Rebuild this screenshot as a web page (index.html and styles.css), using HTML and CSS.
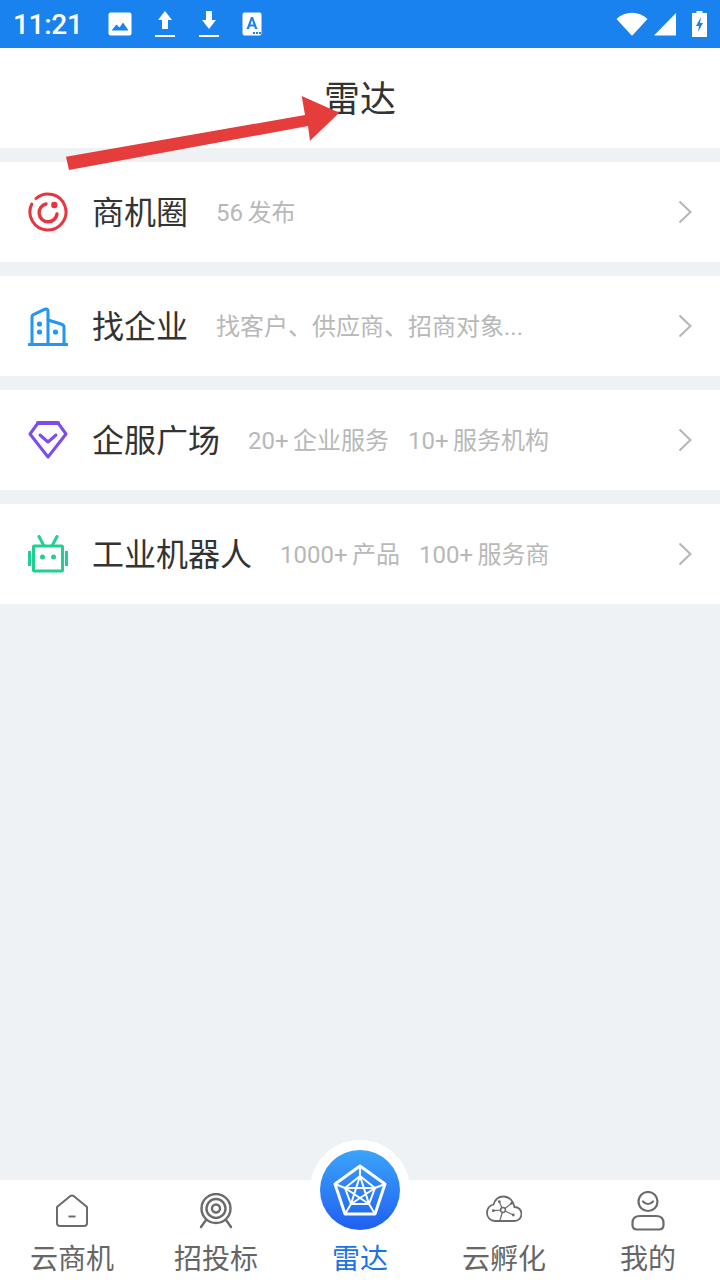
FILE: index.html
```html
<!DOCTYPE html>
<html lang="zh-CN">
<head>
    <meta charset="UTF-8">
    <meta name="viewport" content="width=device-width, initial-scale=1.0">
    <title>雷达</title>
    <link rel="stylesheet" href="styles.css">
</head>
<body>
    <div class="status-bar">
        <span class="time">11:21</span>
        <div class="status-left">
            <svg width="24" height="24" viewBox="0 0 24 24"><rect x="0.5" y="0.5" width="23" height="23" rx="2" fill="#fff"/><path d="M3.5 18.5 L8.5 12.5 L11.5 15.5 L15 10.5 L20.5 18.5 Z" fill="#1a82ef"/></svg>
            <svg width="22" height="28" viewBox="0 0 22 28"><path d="M11 1 L18 10 H14 V19 H8 V10 H4 Z M1 25 H21 V27 H1 Z" fill="#fff"/></svg>
            <svg width="22" height="28" viewBox="0 0 22 28"><path d="M8 1 H14 V10 H18 L11 19 L4 10 H8 Z M1 25 H21 V27 H1 Z" fill="#fff"/></svg>
            <svg width="20" height="24" viewBox="0 0 20 24"><rect x="0.5" y="0.5" width="19" height="23" rx="2" fill="#fff"/><path d="M9 5 H11 L15.5 17 H13 L12.2 14.5 H7.800 L7 17 H4.500 Z M8.500 12.500 H11.500 L10 8 Z" fill="#1a82ef"/><path d="M11 20 h2 v2 h-2 z M14 20 h2 v2 h-2 z M17 20 h2 v2 h-2 z" fill="#1a82ef"/></svg>
        </div>
        <div class="status-right">
            <svg width="32" height="24" viewBox="0 0 32 24"><path d="M0.5 7 C9 -1.500 23 -1.500 31.500 7 L16.800 23 Q16 24 15.200 23 Z" fill="#fff"/></svg>
            <svg width="24" height="24" viewBox="0 0 24 24"><path d="M1 23.500 L23 1 V23.500 Z" fill="#fff"/></svg>
            <svg class="battery" width="15" height="26" viewBox="0 0 15 26"><path d="M4.500 0 H10.500 V2 H15 V26 H0 V2 H4.500 Z" fill="#fff"/><path d="M9 6 L4 15 H7 L6 21 L11 12 H8 Z" fill="#1a82ef"/></svg>
        </div>
    </div>

    <header class="title-bar">雷达</header>

    <main class="list">
        <div class="row">
            <svg class="row-icon" width="40" height="40" viewBox="0 0 40 40" fill="none" stroke="#e8343f" stroke-linecap="round"><path d="M8 6.500 A18 18 0 1 1 3.800 12" stroke-width="3"/><path d="M18 12 A9 9 0 1 0 29 22" stroke-width="3.400"/><circle cx="26.300" cy="13" r="3.200" fill="#e8343f" stroke="none"/></svg>
            <span class="row-title">商机圈</span>
            <span class="row-sub">56 发布</span>
            <svg class="chevron" width="14" height="24" viewBox="0 0 14 24"><path d="M1.500 1.500 L12.500 12 L1.500 22.500" fill="none" stroke="#b5b5b5" stroke-width="2"/></svg>
        </div>
        <div class="row">
            <svg class="row-icon" width="40" height="40" viewBox="0 0 40 40" fill="none" stroke="#2196f3" stroke-width="3" stroke-linecap="round" stroke-linejoin="round"><path d="M1 38.500 H39"/><path d="M4 38 V11 Q4 9 6 8.400 L17 3.200 Q20 2.400 20 5 V38"/><path d="M20 14 L33 18 Q36 19 36 21 V38"/><g fill="#2196f3" stroke="none"><circle cx="11.500" cy="18" r="2.600"/><circle cx="11.500" cy="26" r="2.600"/><circle cx="27.500" cy="26" r="2.600"/></g></svg>
            <span class="row-title">找企业</span>
            <span class="row-sub">找客户、供应商、招商对象...</span>
            <svg class="chevron" width="14" height="24" viewBox="0 0 14 24"><path d="M1.500 1.500 L12.500 12 L1.500 22.500" fill="none" stroke="#b5b5b5" stroke-width="2"/></svg>
        </div>
        <div class="row">
            <svg class="row-icon" width="40" height="38" viewBox="0 0 40 38" fill="none" stroke="#7c4dea" stroke-width="3" stroke-linecap="round" stroke-linejoin="round"><path d="M10 2 H30 L38 13 L20 36 L2 13 Z"/><path d="M10 2 H30" stroke-width="4"/><path d="M12 14 L20 21 L28 14"/></svg>
            <span class="row-title">企服广场</span>
            <span class="row-sub">20+ 企业服务</span>
            <span class="row-sub">10+ 服务机构</span>
            <svg class="chevron" width="14" height="24" viewBox="0 0 14 24"><path d="M1.500 1.500 L12.500 12 L1.500 22.500" fill="none" stroke="#b5b5b5" stroke-width="2"/></svg>
        </div>
        <div class="row">
            <svg class="row-icon" width="40" height="38" viewBox="0 0 40 38" fill="none" stroke="#22cf8e" stroke-width="3" stroke-linecap="round"><rect x="5.500" y="11" width="29" height="25" rx="1"/><path d="M11 1.500 L15.500 10 M29 1.500 L24.500 10"/><path d="M1.500 16 V31 M38.500 16 V31" stroke-linecap="butt"/><circle cx="14.500" cy="22" r="2.500" fill="#22cf8e" stroke="none"/><circle cx="25.500" cy="22" r="2.500" fill="#22cf8e" stroke="none"/></svg>
            <span class="row-title">工业机器人</span>
            <span class="row-sub">1000+ 产品</span>
            <span class="row-sub">100+ 服务商</span>
            <svg class="chevron" width="14" height="24" viewBox="0 0 14 24"><path d="M1.500 1.500 L12.500 12 L1.500 22.500" fill="none" stroke="#b5b5b5" stroke-width="2"/></svg>
        </div>
    </main>

    <nav class="tab-bar">
        <div class="tab">
            <div class="tab-icon">
                <svg width="34" height="34" viewBox="0 0 34 34" fill="none" stroke="#6b6b6b" stroke-width="2" stroke-linejoin="round"><path d="M2 13 L15 2.200 Q17 1 19 2.200 L32 13 V29 Q32 32 29 32 H5 Q2 32 2 29 Z"/><path d="M13.500 22.500 H20.500"/></svg>
            </div>
            <span>云商机</span>
        </div>
        <div class="tab">
            <div class="tab-icon">
                <svg width="36" height="36" viewBox="0 0 36 36" fill="none" stroke="#6b6b6b" stroke-width="2.400"><circle cx="18" cy="15.500" r="14.500"/><circle cx="18" cy="15.500" r="9.500"/><circle cx="18" cy="15.500" r="4"/><path d="M8 27 L3 34 M28 27 L33 34" stroke-linecap="round"/></svg>
            </div>
            <span>招投标</span>
        </div>
        <div class="tab tab-active">
            <div class="radar-ring">
                <div class="radar-btn">
                    <svg width="54" height="52" viewBox="0 0 54 52" fill="none" stroke="#fff" stroke-width="2" stroke-linejoin="round"><path d="M27 2 L52 20 L42 50 H12 L2 20 Z" stroke-width="3"/><path d="M27 12 L42 24 L36 40 H18 L12 24 Z"/><path d="M27 2 V12 M52 20 L42 24 M42 50 L36 40 M12 50 L18 40 M2 20 L12 24"/><path d="M27 12 L36 40 L12 24 H42 L18 40 Z"/></svg>
                </div>
            </div>
            <div class="tab-icon"></div>
            <span>雷达</span>
        </div>
        <div class="tab">
            <div class="tab-icon tab-icon-cloud">
                <svg width="36" height="28" viewBox="0 0 36 28" fill="none" stroke="#6b6b6b" stroke-width="1.800" stroke-linecap="round"><path d="M9 26 H28 C33 26 35.500 22.500 35.500 19 C35.500 15 32.500 12 28.500 12 C27.500 5.500 23 1.500 17.500 1.500 C12.500 1.500 9 4.500 7.500 9.500 C3.500 10.500 1 14 1 18 C1 22.500 4.500 26 9 26 Z"/><path d="M17 15 L25.600 8.300 M17 15 L27.300 20 M17 15 L14 25 M17 15 L7.300 15.700 M17 15 L13.300 6.700" stroke-width="1.200"/><circle cx="17" cy="15" r="2.400" fill="#fff" stroke-width="1.500"/><g fill="#6b6b6b" stroke="none"><circle cx="25.600" cy="8.300" r="1.400"/><circle cx="27.300" cy="20" r="1.400"/><circle cx="7.300" cy="15.700" r="1.400"/><circle cx="13.300" cy="6.700" r="1.400"/></g></svg>
            </div>
            <span>云孵化</span>
        </div>
        <div class="tab">
            <div class="tab-icon">
                <svg width="34" height="40" viewBox="0 0 34 40" fill="none" stroke="#6b6b6b" stroke-width="2.200" stroke-linecap="round"><circle cx="17" cy="10.500" r="9.500"/><path d="M12 10.500 Q17 15.500 22 10.500"/><path d="M9 25 H25 Q32.500 25 32.500 32 V34 Q32.500 38.500 28 38.500 H6 Q1.500 38.500 1.500 34 V32 Q1.500 25 9 25 Z"/></svg>
            </div>
            <span>我的</span>
        </div>
    </nav>

    <svg class="arrow" width="290" height="90" viewBox="0 0 290 90"><path d="M6 66.700 L245 25 L241.700 6 L279.300 22.700 L250 50.700 L248 36 L9 80 Z" fill="#e53c3c"/></svg>
</body>
</html>
```

FILE: styles.css
```css
* {
    box-sizing: border-box;
}
body {
    margin: 0;
    width: 720px;
    height: 1280px;
    overflow: hidden;
    position: relative;
    display: flex;
    flex-direction: column;
    background-color: #eef2f5;
    font-family: "Roboto", "Noto Sans CJK SC", sans-serif;
    color: #333;
}
.status-bar {
    height: 48px;
    flex-shrink: 0;
    background-color: #1a82ef;
    color: #fff;
    display: flex;
    align-items: center;
    padding: 0 13px;
}
.time {
    font-size: 28px;
    font-weight: 500;
    letter-spacing: -0.3px;
}
.status-left {
    display: flex;
    align-items: center;
    gap: 22px;
    margin-left: 25px;
}
.status-right {
    display: flex;
    align-items: center;
    gap: 5px;
    margin-left: auto;
}
.battery {
    margin-left: 10px;
}
.title-bar {
    height: 100px;
    flex-shrink: 0;
    background-color: #fff;
    display: flex;
    align-items: center;
    justify-content: center;
    padding-bottom: 4px;
    font-size: 36px;
}
.list {
    flex: 1;
    padding-top: 14px;
    display: flex;
    flex-direction: column;
    gap: 14px;
}
.row {
    height: 100px;
    background-color: #fff;
    display: flex;
    align-items: center;
    padding: 0 28px;
}
.row-icon {
    flex-shrink: 0;
    margin-right: 24px;
}
.row-title {
    font-size: 32px;
    color: #333;
    margin-right: 28px;
    margin-bottom: 4px;
}
.row-sub {
    font-size: 24px;
    color: #b8b8b8;
    word-spacing: -1.5px;
    margin-right: 19px;
    margin-bottom: 4px;
}
.chevron {
    margin-left: auto;
}
.tab-bar {
    height: 100px;
    flex-shrink: 0;
    background-color: #fff;
    display: flex;
}
.tab {
    width: 144px;
    display: flex;
    flex-direction: column;
    align-items: center;
    gap: 9px;
    padding-top: 11px;
    font-size: 28px;
    line-height: 40px;
    color: #666;
    position: relative;
}
.tab-icon {
    height: 40px;
    display: flex;
    align-items: center;
    justify-content: center;
}
.tab-icon-cloud {
    padding-bottom: 4px;
}
.tab-active {
    color: #1a73e8;
}
.radar-ring {
    position: absolute;
    top: -40px;
    left: 22px;
    width: 100px;
    height: 100px;
    border-radius: 50%;
    background-color: #fff;
    display: flex;
    align-items: center;
    justify-content: center;
}
.radar-btn {
    width: 80px;
    height: 80px;
    border-radius: 50%;
    background: linear-gradient(#3ba4fb, #1f5ff0);
    display: flex;
    align-items: center;
    justify-content: center;
}
.arrow {
    position: absolute;
    left: 60px;
    top: 90px;
}
```
